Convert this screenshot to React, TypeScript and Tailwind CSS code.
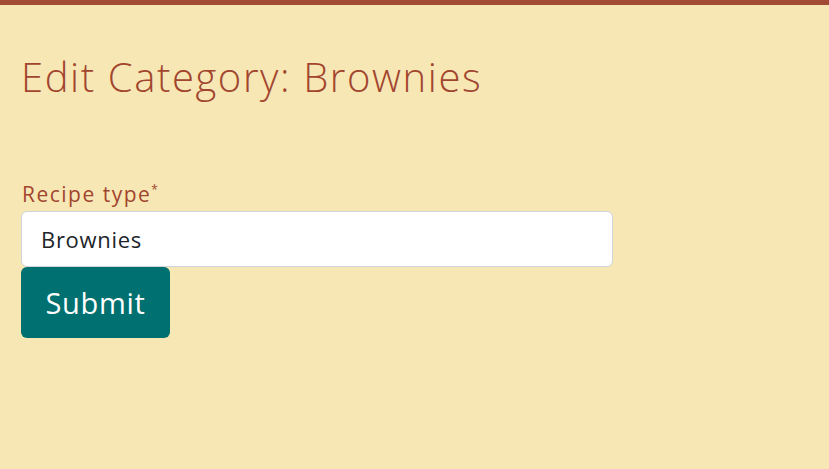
export default function App() {
  return (
    <div className="min-h-[469px] bg-[#f7e7b4] border-t-[5px] border-[#a24b35] font-['Open_Sans','Lato',sans-serif]">
      <main className="px-[21px] pt-[48px]">
        <h1 className="text-[40px] leading-[48px] font-light text-[#a2452f] tracking-[1.6px]">
          Edit Category: Brownies
        </h1>
        <form className="mt-[78px] w-[592px]" onSubmit={e => e.preventDefault()}>
          <label className="block text-[21px] leading-[30px] font-normal text-[#a2452f] mb-[2px] pl-[1px] tracking-[1.5px]">
            Recipe type<span className="text-[12px] align-top leading-[22px] tracking-normal">*</span>
          </label>
          <input
            type="text"
            defaultValue="Brownies"
            className="block w-full h-[56px] bg-white border border-[#ced4da] rounded-[6px] px-[19px] text-[22px] text-[#212529] tracking-[0.7px] focus:outline-none"
          />
          <button
            type="submit"
            className="w-[149px] h-[71px] bg-[#007070] text-white text-[29px] tracking-[0.7px] rounded-[6px]"
          >
            Submit
          </button>
        </form>
      </main>
    </div>
  )
}
